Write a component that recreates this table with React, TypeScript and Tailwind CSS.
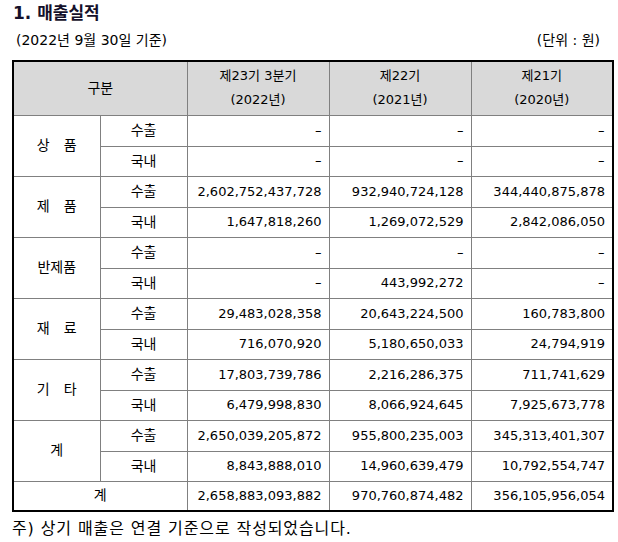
type Row = {
  sub: string;
  v: [string, string, string];
};

type Group = {
  label: string;
  rows: [Row, Row];
};

const groups: Group[] = [
  {
    label: "상　품",
    rows: [
      { sub: "수출", v: ["-", "-", "-"] },
      { sub: "국내", v: ["-", "-", "-"] },
    ],
  },
  {
    label: "제　품",
    rows: [
      { sub: "수출", v: ["2,602,752,437,728", "932,940,724,128", "344,440,875,878"] },
      { sub: "국내", v: ["1,647,818,260", "1,269,072,529", "2,842,086,050"] },
    ],
  },
  {
    label: "반제품",
    rows: [
      { sub: "수출", v: ["-", "-", "-"] },
      { sub: "국내", v: ["-", "443,992,272", "-"] },
    ],
  },
  {
    label: "재　료",
    rows: [
      { sub: "수출", v: ["29,483,028,358", "20,643,224,500", "160,783,800"] },
      { sub: "국내", v: ["716,070,920", "5,180,650,033", "24,794,919"] },
    ],
  },
  {
    label: "기　타",
    rows: [
      { sub: "수출", v: ["17,803,739,786", "2,216,286,375", "711,741,629"] },
      { sub: "국내", v: ["6,479,998,830", "8,066,924,645", "7,925,673,778"] },
    ],
  },
  {
    label: "계",
    rows: [
      { sub: "수출", v: ["2,650,039,205,872", "955,800,235,003", "345,313,401,307"] },
      { sub: "국내", v: ["8,843,888,010", "14,960,639,479", "10,792,554,747"] },
    ],
  },
];

const cell = "border border-[#808080] align-middle";
const num = `${cell} text-right pr-[7px]`;

// dashes in the source are drawn a bit wider than a plain hyphen
function Val({ v }: { v: string }) {
  if (v === "-") return <span className="inline-block scale-x-150 origin-right">-</span>;
  return <>{v}</>;
}

export default function App() {
  return (
    <div
      className="w-[618px] h-[542px] bg-white text-black px-[12px] pt-[3px]"
      style={{ fontFamily: '"DejaVu Sans", "Noto Sans CJK KR", sans-serif' }}
    >
      <h1 className="text-[17px] leading-[20px] font-bold text-[#14102a] pl-[1px]">
        1. 매출실적
      </h1>

      <div className="flex justify-between mt-[8px] text-[14px] leading-[18px] pl-[4px] pr-[6px]">
        <span>(2022년 9월 30일 기준)</span>
        <span>(단위 : 원)</span>
      </div>

      <table className="mt-[11px] w-[600px] border-collapse border-2 border-black text-[13px] table-fixed">
        <colgroup>
          <col className="w-[87px]" />
          <col className="w-[87px]" />
          <col className="w-[142px]" />
          <col className="w-[142px]" />
          <col className="w-[142px]" />
        </colgroup>
        <thead>
          <tr className="h-[54px] bg-[#d9d9d9]">
            <th colSpan={2} className={`${cell} font-normal text-center text-[14px]`}>
              구분
            </th>
            <th className={`${cell} font-normal text-center leading-[24px]`}>
              제23기 3분기
              <br />
              (2022년)
            </th>
            <th className={`${cell} font-normal text-center leading-[24px]`}>
              제22기
              <br />
              (2021년)
            </th>
            <th className={`${cell} font-normal text-center leading-[24px]`}>
              제21기
              <br />
              (2020년)
            </th>
          </tr>
        </thead>
        <tbody>
          {groups.map((g) =>
            g.rows.map((r, i) => (
              <tr key={g.label + r.sub} className={i === 0 ? "h-[31px]" : "h-[30px]"}>
                {i === 0 && (
                  <td rowSpan={2} className={`${cell} text-center text-[14px]`}>
                    {g.label}
                  </td>
                )}
                <td className={`${cell} text-center text-[14px]`}>{r.sub}</td>
                {r.v.map((v, k) => (
                  <td key={k} className={num}>
                    <Val v={v} />
                  </td>
                ))}
              </tr>
            ))
          )}
          <tr className="h-[30px]">
            <td colSpan={2} className={`${cell} text-center text-[14px]`}>
              계
            </td>
            <td className={num}>2,658,883,093,882</td>
            <td className={num}>970,760,874,482</td>
            <td className={num}>356,105,956,054</td>
          </tr>
        </tbody>
      </table>

      <p className="mt-[8px] text-[16px] leading-[18px] tracking-[0.9px]">
        주) 상기 매출은 연결 기준으로 작성되었습니다.
      </p>
    </div>
  );
}
